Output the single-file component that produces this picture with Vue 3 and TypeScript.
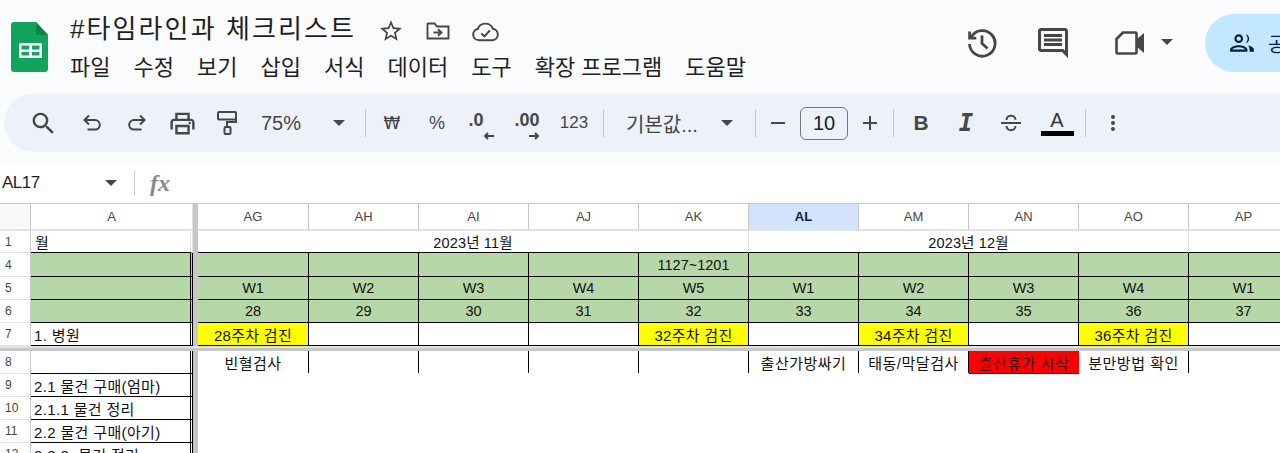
<script setup lang="ts">
interface Cell { text?: string; span?: number; cls?: string }
interface Row { num: string; a: string; aCls: string; cellCls: string; cells: Cell[] }

const colLetters: string[] = ['AG', 'AH', 'AI', 'AJ', 'AK', 'AL', 'AM', 'AN', 'AO', 'AP']
const menus: string[] = ['파일', '수정', '보기', '삽입', '서식', '데이터', '도구', '확장 프로그램', '도움말']

const texts = (items: string[], cls = ''): Cell[] => items.map((text) => ({ text, cls }))

const topRows: Row[] = [
  {
    num: '1', a: '월', aCls: 'a-plain', cellCls: 'title',
    cells: [
      { text: '2023년 11월', span: 5 },
      { text: '2023년 12월', span: 4 },
      { text: '' }
    ]
  },
  { num: '4', a: '', aCls: 'a-green', cellCls: 'green', cells: texts(['', '', '', '', '1127~1201', '', '', '', '', '']) },
  { num: '5', a: '', aCls: 'a-green', cellCls: 'green', cells: texts(['W1', 'W2', 'W3', 'W4', 'W5', 'W1', 'W2', 'W3', 'W4', 'W1']) },
  { num: '6', a: '', aCls: 'a-green', cellCls: 'green', cells: texts(['28', '29', '30', '31', '32', '33', '34', '35', '36', '37']) },
  {
    num: '7', a: '1. 병원', aCls: 'a-line', cellCls: 'plain',
    cells: [
      { text: '28주차 검진', cls: 'yellow' }, { text: '' }, { text: '' }, { text: '' },
      { text: '32주차 검진', cls: 'yellow' }, { text: '' },
      { text: '34주차 검진', cls: 'yellow' }, { text: '' },
      { text: '36주차 검진', cls: 'yellow' }, { text: '' }
    ]
  }
]

const bottomRows: Row[] = [
  {
    num: '8', a: '', aCls: 'a-line', cellCls: 'task',
    cells: [
      { text: '빈혈검사' }, { text: '' }, { text: '' }, { text: '' }, { text: '' },
      { text: '출산가방싸기' }, { text: '태동/막달검사' },
      { text: '출산휴가 시작', cls: 'red' },
      { text: '분만방법 확인' }, { text: '', cls: 'open' }
    ]
  },
  { num: '9', a: '2.1 물건 구매(엄마)', aCls: 'a-line', cellCls: 'none', cells: [] },
  { num: '10', a: '2.1.1 물건 정리', aCls: 'a-line', cellCls: 'none', cells: [] },
  { num: '11', a: '2.2 물건 구매(아기)', aCls: 'a-line', cellCls: 'none', cells: [] },
  { num: '12', a: '2.2.2. 물건 정리', aCls: 'a-line', cellCls: 'none', cells: [] }
]
</script>

<template>
  <div class="page">
    <header class="head">
      <svg class="logo" viewBox="0 0 37 50" aria-hidden="true">
        <path d="M3 0H25L37 13V47a3 3 0 0 1-3 3H3a3 3 0 0 1-3-3V3a3 3 0 0 1 3-3Z" fill="#11a45f" />
        <path d="M25 0L37 13H26a1 1 0 0 1-1-1Z" fill="#0c8446" />
        <path d="M8 21H31V36H8Z M10.500 23.500V27.500H18V23.500Z M21 23.500V27.500H28.500V23.500Z M10.500 30V33.500H18V30Z M21 30V33.500H28.500V30Z" fill="#fff" fill-rule="evenodd" />
      </svg>
      <div class="doc">
        <div class="title-row">
          <span class="doc-title">#타임라인과 체크리스트</span>
          <svg class="ico star" viewBox="0 0 24 24"><path d="M22 9.24l-7.19-.62L12 2 9.19 8.63 2 9.24l5.46 4.73L5.82 21 12 17.27 18.18 21l-1.63-7.03L22 9.24zM12 15.4l-3.76 2.27 1-4.28-3.32-2.88 4.38-.38L12 6.1l1.71 4.04 4.38.38-3.32 2.88 1 4.28L12 15.4z" /></svg>
          <svg class="line-ico folder" viewBox="0 0 24 20"><path d="M1.500 3V17.500H22.500V5.500H11L8.500 2.500H2A.5.5 0 0 0 1.500 3Z" /><path d="M7.500 11.500H15M12 8.200L15.500 11.500L12 14.800" /></svg>
          <svg class="line-ico cloud" viewBox="0 0 28 22"><path d="M7 20.500A5.800 5.800 0 0 1 6 9A8.300 8.300 0 0 1 21.600 8.600A6 6 0 0 1 21.500 20.500Z" /><path d="M9.500 13.500L12.800 16.500L18.500 10.500" /></svg>
        </div>
        <nav class="menu">
          <span v-for="m in menus" :key="m">{{ m }}</span>
        </nav>
      </div>
      <div class="actions">
        <svg class="line-ico hist" viewBox="0 0 30 30"><path d="M4.200 9A12.800 12.800 0 1 1 2.500 16" /><path d="M2.600 3.500V10.200H9.300" /><path d="M15 7.500V15.500L20.500 20.500" /></svg>
        <svg class="ico comment" viewBox="0 0 24 24"><path d="M21.990 4c0-1.100-.89-2-1.990-2H4c-1.100 0-2 .9-2 2v12c0 1.100.9 2 2 2h14l4 4-.01-18zM20 4v13.170L18.830 16H4V4h16zM6 12h12v2H6zm0-3h12v2H6zm0-3h12v2H6z" /></svg>
        <svg class="video" viewBox="0 0 30 24"><path d="M8 1.500H20.500A1 1 0 0 1 21.500 2.500V21.500A1 1 0 0 1 20.500 22.500H2.500A1 1 0 0 1 1.500 21.500V8Z" fill="none" stroke="#444746" stroke-width="2.600" stroke-linejoin="round" /><path d="M22 8L29 2V22L22 16Z" fill="#444746" /></svg>
        <span class="caret cam-caret"></span>
        <div class="share">
          <svg class="ico people" viewBox="0 0 24 24"><path d="M9 12a4 4 0 1 0 0-8 4 4 0 0 0 0 8zm0-6a2 2 0 1 1 0 4 2 2 0 0 1 0-4zm0 8c-2.670 0-8 1.340-8 4v2h16v-2c0-2.660-5.330-4-8-4zm-6 4c.2-.7 3.300-2 6-2s5.800 1.300 6 2H3zM15.500 4.100a4 4 0 0 1 0 7.800 6 6 0 0 0 0-7.800zM17.500 14.200c2.700.5 5.500 1.800 5.500 3.800v2h-4v-2c0-1.500-.6-2.800-1.500-3.800z" /></svg>
          <span class="share-text">공유</span>
        </div>
      </div>
    </header>

    <div class="toolbar">
      <button class="tb first"><svg class="ico big" viewBox="0 0 24 24"><path d="M15.500 14h-.79l-.28-.27A6.471 6.471 0 0 0 16 9.500 6.500 6.500 0 1 0 9.500 16c1.610 0 3.090-.59 4.230-1.570l.27.28v.79l5 4.990L20.490 19l-4.990-5zm-6 0C7.010 14 5 11.990 5 9.500S7.010 5 9.500 5 14 7.010 14 9.500 11.990 14 9.500 14z" /></svg></button>
      <button class="tb"><svg class="line-ico t20" viewBox="0 0 20 20"><path d="M7 2.500L2.500 7L7 11.500M3 7H13a4.800 4.800 0 0 1 0 9.600H5.500" /></svg></button>
      <button class="tb"><svg class="line-ico t20" viewBox="0 0 20 20"><path d="M13 2.500L17.500 7L13 11.500M17 7H7a4.800 4.800 0 0 0 0 9.600H14.500" /></svg></button>
      <button class="tb"><svg class="ico big" viewBox="0 0 24 24"><path d="M19 8h-1V3H6v5H5c-1.660 0-3 1.340-3 3v6h4v4h12v-4h4v-6c0-1.660-1.340-3-3-3zM8 5h8v3H8V5zm8 14H8v-4h8v4zm2-2v-4H6v4H4v-6c0-.55.45-1 1-1h14c.55 0 1 .45 1 1v6h-2z" /><circle cx="18" cy="11.500" r="1" /></svg></button>
      <button class="tb"><svg class="line-ico roller" viewBox="0 0 20 24"><rect x="1" y="1" width="18" height="7.500" rx="1" /><path d="M19 5V11H10V16" /><rect x="7.500" y="16" width="6" height="7" rx="1" /></svg></button>
      <button class="tb zoom"><span>75%</span><span class="caret"></span></button>
      <i class="sep left4"></i>
      <button class="tb txt won">₩</button>
      <button class="tb txt">%</button>
      <button class="tb dec dec-one"><b>.0</b><svg class="mini" viewBox="0 0 12 8"><path d="M11 4H2M5 1L2 4L5 7" /></svg></button>
      <button class="tb dec"><b>.00</b><svg class="mini" viewBox="0 0 12 8"><path d="M1 4H10M7 1L10 4L7 7" /></svg></button>
      <button class="tb txt num">123</button>
      <i class="sep"></i>
      <button class="tb font"><span>기본값...</span><span class="caret"></span></button>
      <i class="sep"></i>
      <div class="stepper">
        <svg class="line-ico step" viewBox="0 0 20 20"><path d="M3 10H17" /></svg>
        <span class="size">10</span>
        <svg class="line-ico step" viewBox="0 0 20 20"><path d="M3 10H17M10 3V17" /></svg>
      </div>
      <i class="sep"></i>
      <button class="tb bold">B</button>
      <button class="tb ital">I</button>
      <button class="tb"><svg class="line-ico t20" viewBox="0 0 20 20"><path d="M0 10H20M5.500 7V6.800C5.500 1.500 14.500 1.500 14.500 6.800M5.500 13C5.500 18.500 14.500 18.500 14.500 13" /></svg></button>
      <button class="tb color"><span>A</span><i></i></button>
      <i class="sep"></i>
      <button class="tb"><svg class="ico" viewBox="0 0 24 24"><path d="M12 8a2 2 0 1 0 0-4 2 2 0 0 0 0 4zm0 2a2 2 0 1 0 0 4 2 2 0 0 0 0-4zm0 6a2 2 0 1 0 0 4 2 2 0 0 0 0-4z" /></svg></button>
    </div>
    <div class="gapband"></div>

    <div class="formula">
      <span class="name">AL17</span>
      <span class="caret"></span>
      <i class="fsep"></i>
      <span class="fx">fx</span>
    </div>

    <div class="sheet">
      <div class="corner"></div>
      <div class="col-head a-head">A</div>
      <div class="col-gap"></div>
      <div v-for="c in colLetters" :key="c" class="col-head" :class="{ active: c === 'AL' }">{{ c }}</div>

      <template v-for="r in topRows" :key="r.num">
        <div class="rownum">{{ r.num }}</div>
        <div class="a" :class="r.aCls">{{ r.a }}</div>
        <div class="col-gap"></div>
        <div
          v-for="(cell, i) in r.cells"
          :key="i"
          class="cell"
          :class="[r.cellCls, cell.cls]"
          :style="cell.span ? { gridColumn: `span ${cell.span}` } : undefined"
        >{{ cell.text }}</div>
      </template>

      <div class="freeze"></div>

      <template v-for="r in bottomRows" :key="r.num">
        <div class="rownum">{{ r.num }}</div>
        <div class="a" :class="r.aCls">{{ r.a }}</div>
        <div class="col-gap"></div>
        <template v-if="r.cells.length">
          <div v-for="(cell, i) in r.cells" :key="i" class="cell" :class="[r.cellCls, cell.cls]">{{ cell.text }}</div>
        </template>
        <div v-else class="empty"></div>
      </template>
    </div>
  </div>
</template>

<style scoped>
.page {
  width: 1280px;
  height: 453px;
  overflow: hidden;
  background: #f9fbfd;
  color: #1f1f1f;
  font-family: "Liberation Sans", "Noto Sans CJK KR", sans-serif;
}
button { border: 0; background: none; padding: 0; color: inherit; font-family: inherit; }
.ico { fill: #444746; width: 24px; height: 24px; display: block; flex: none; }
.ico.big { width: 29px; height: 29px; }
.line-ico { fill: none; stroke: #444746; stroke-width: 2; display: block; flex: none; }

.head { height: 94px; display: flex; position: relative; }
.logo { width: 37px; height: 50px; margin: 22px 0 0 11px; flex: none; }
.doc { margin-left: 22px; padding-top: 11px; }
.title-row { display: flex; align-items: center; height: 36px; }
.doc-title { font-size: 26px; letter-spacing: 2.100px; line-height: 36px; white-space: nowrap; width: 308px; }
.star { width: 26px; height: 26px; margin: 3px 22px 0 0; }
.folder { width: 24px; height: 20px; stroke-width: 1.900; margin: 3px 22px 0 0; }
.cloud { width: 27px; height: 22px; margin-top: 3px; }
.menu { display: flex; gap: 23px; font-size: 22px; line-height: 30px; margin-top: 6px; white-space: nowrap; }

.actions { margin-left: auto; display: flex; align-items: flex-start; padding-top: 14px; }
.hist { width: 30px; height: 30px; stroke-width: 2.800; margin: 14px 38px 0 0; }
.comment { width: 36px; height: 36px; margin: 11px 44px 0 0; }
.video { width: 30px; height: 24px; margin-top: 17px; display: block; }
.cam-caret { margin: 25px 32px 0 16px; }
.share { width: 75px; height: 58px; background: #c2e7ff; border-radius: 29px 0 0 29px; display: flex; align-items: center; padding-left: 24px; box-sizing: border-box; overflow: hidden; }
.people { width: 26px; height: 26px; fill: #041e49; }
.share-text { margin-left: 13px; font-size: 20px; color: #041e49; white-space: nowrap; }

.caret { display: block; flex: none; width: 0; height: 0; border-left: 6px solid transparent; border-right: 6px solid transparent; border-top: 6px solid #444746; }

.toolbar { margin-left: 4px; height: 58px; background: #edf2fa; border-radius: 29px 0 0 29px; display: flex; align-items: center; gap: 9px; padding-left: 21px; color: #444746; }
.tb { width: 36px; height: 36px; display: flex; align-items: center; justify-content: center; flex: none; }
.first { margin-right: 4px; }
.t20 { width: 20px; height: 20px; }
.roller { width: 20px; height: 24px; }
.zoom { width: 98px; justify-content: space-between; padding: 0 7px; box-sizing: border-box; font-size: 20px; color: #444746; }
.sep { display: block; width: 1px; height: 28px; background: #c7c7c7; flex: none; }
.left4 { margin: 0 -1px 0 4px; }
.txt { font-size: 18px; }
.won { font-family: "DejaVu Sans", sans-serif; font-size: 17px; }
.num { width: 40px; font-size: 17px; }
.dec { position: relative; font-size: 18px; line-height: 20px; padding-bottom: 6px; box-sizing: border-box; }
.dec-one { padding-right: 12px; }
.dec b { font-weight: 700; }
.mini { width: 12px; height: 8px; fill: none; stroke: #444746; stroke-width: 2; position: absolute; left: 19px; top: 27px; }
.font { width: 133px; justify-content: space-between; padding: 0 13px; box-sizing: border-box; font-size: 20px; }
.stepper { display: flex; align-items: center; margin-right: 1px; }
.step { width: 20px; height: 20px; margin: 0 3px; }
.size { width: 48px; height: 33px; box-sizing: border-box; border: 1px solid #747775; border-radius: 6px; margin: 0 9px; text-align: center; font-size: 20px; line-height: 31px; color: #1f1f1f; }
.bold { font-size: 21px; font-weight: 700; }
.ital { font-size: 24px; font-weight: 700; font-style: italic; font-family: "DejaVu Sans Mono", monospace; }
.color { width: 38px; flex-direction: column; font-size: 20px; line-height: 20px; gap: 1px; color: #333; }
.color i { display: block; width: 33px; height: 5px; background: #000; }

.gapband { height: 11px; }

.formula { height: 40px; background: #fff; display: flex; align-items: center; box-sizing: border-box; padding-left: 2px; }
.name { font-size: 17px; letter-spacing: -0.500px; color: #1f1f1f; width: 103px; }
.fsep { display: block; width: 1px; height: 24px; background: #c7c7c7; margin-left: 17px; }
.fx { margin-left: 15px; font-family: "Liberation Serif", serif; font-style: italic; font-weight: 700; font-size: 24px; color: #8a8a8a; }

.sheet {
  height: 250px;
  background: #fff;
  border-top: 1px solid #c7c7c7;
  display: grid;
  grid-template-columns: 31px 162px 5px 111px repeat(9, 110px);
  grid-template-rows: 27px 22px 24px 23px 23px 23px 5px 23px 23px 23px 23px 23px;
  overflow: hidden;
  font-size: 14.500px;
}
.corner { background: #f8f9fa; border-right: 1px solid #c7c7c7; border-bottom: 2px solid #e1e3e1; }
.col-head { display: flex; align-items: center; justify-content: center; font-size: 13px; color: #444746; border-right: 1px solid #c7c7c7; border-bottom: 2px solid #e1e3e1; box-sizing: border-box; }
.col-head.active { background: #d3e3fd; color: #041e49; font-weight: 700; }
.a-head { border-right: 1px solid #e1e3e1; }
.col-gap { background: #c7c7c7; }
.rownum { display: flex; align-items: center; padding-left: 5px; font-size: 12px; color: #444746; border-right: 1px solid #c7c7c7; border-bottom: 1px solid #e1e3e1; box-sizing: border-box; }
.a { display: flex; align-items: center; padding-left: 3px; box-sizing: border-box; white-space: nowrap; overflow: hidden; border-right: 3px double #000; border-bottom: 1px solid #000; color: #111; font-size: 15px; letter-spacing: 0.350px; }
.a-plain { border-right: 3px double #e6e6e6; padding-left: 4px; }
.a-green { background: #b6d7a8; }
.cell { display: flex; align-items: center; justify-content: center; white-space: nowrap; box-sizing: border-box; color: #111; overflow: hidden; }
.title { border-right: 1px solid #e1e3e1; border-bottom: 1px solid #000; letter-spacing: 0.150px; }
.green { background: #b6d7a8; border-right: 1px solid #000; border-bottom: 1px solid #000; }
.plain { border-right: 1px solid #000; border-bottom: 1px solid #000; font-size: 15px; letter-spacing: 0.300px; }
.task { border-right: 1px solid #000; height: 22px; font-size: 15px; letter-spacing: 0.500px; }
.task.open { border-right: 0; }
.yellow { background: #ff0; }
.red { background: #f00; border-bottom: 1px solid #000; border-right: 0; height: 23px; color: #3a0000; }
.freeze { grid-column: 1 / -1; background: #c7c7c7; border-top: 2px solid #e1e3e1; box-sizing: border-box; }
.empty { grid-column: 4 / -1; }
</style>
